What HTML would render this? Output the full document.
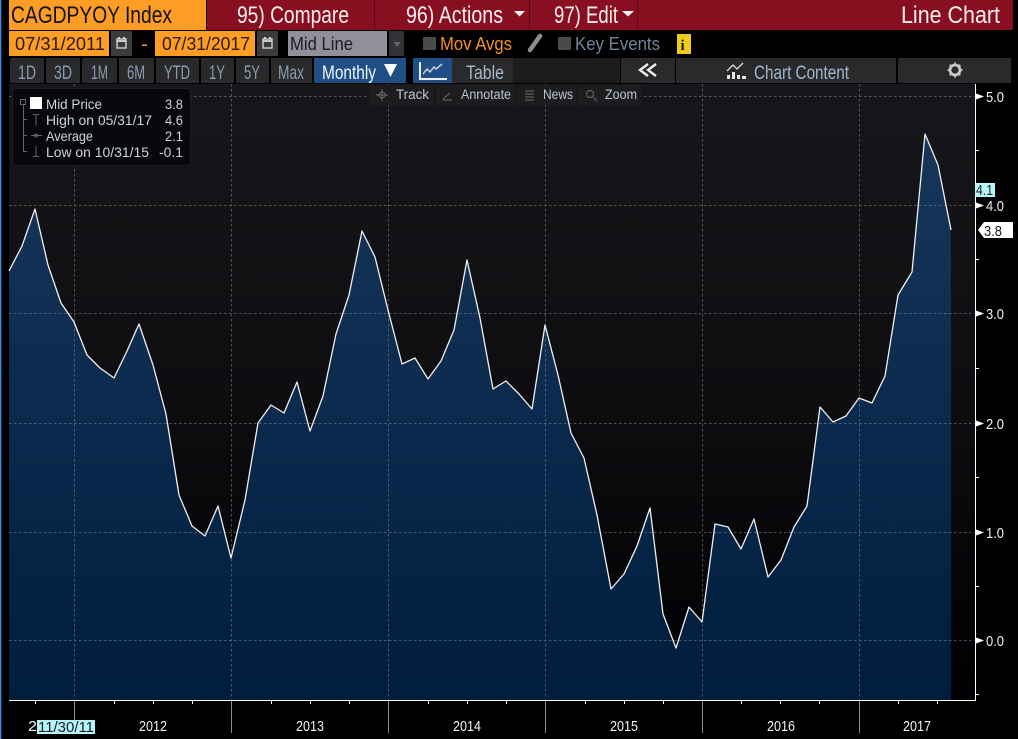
<!DOCTYPE html>
<html><head><meta charset="utf-8"><style>
html,body{margin:0;padding:0;background:#000;width:1018px;height:739px;overflow:hidden}
svg{display:block}
text{font-family:"Liberation Sans",sans-serif}
</style></head><body>
<svg width="1018" height="739" viewBox="0 0 1018 739" xmlns="http://www.w3.org/2000/svg">
<defs>
<linearGradient id="bg" x1="0" y1="84" x2="0" y2="700" gradientUnits="userSpaceOnUse"><stop offset="0" stop-color="#17171b"/><stop offset="0.5" stop-color="#0e0e11"/><stop offset="1" stop-color="#000003"/></linearGradient>
<linearGradient id="ar" x1="0" y1="134" x2="0" y2="700" gradientUnits="userSpaceOnUse"><stop offset="0" stop-color="#17365a"/><stop offset="0.4" stop-color="#0d2c50"/><stop offset="1" stop-color="#001d3d"/></linearGradient>
</defs>
<rect width="1018" height="739" fill="#000"/>
<rect x="0" y="0" width="1.3" height="739" fill="#3f8be0"/>
<!-- plot -->
<rect x="9" y="84" width="966" height="616" fill="url(#bg)"/>
<path fill="url(#ar)" d="M9,700L9,271L22,246L35,209L48,265L61,303L74,322L87,355L100,368L114,378L127,351L139,324L153,365L166,414L179,495L192,526L205,536L218,506L231,558L245,500L258,423L271,405L284,413L297,382L310,431L323,396L336,334L349,295L362,231L375,257L388,310L402,364L415,358L428,379L441,361L454,330L467,260L480,318L493,389L506,381L519,394L532,409L545,325L558,375L571,433L584,458L597,515L611,589L624,574L637,546L650,508L663,614L676,648L689,607L702,622L715,524L728,527L741,549L754,519L768,577L781,560L794,527L807,506L820,407L833,422L846,416L859,398L872,403L885,376L898,295L912,272L925,134L938,165L951,230L951,700Z"/>
<g stroke="#8a8d92" stroke-width="1" stroke-dasharray="2.500 2.500" fill="none" opacity=".55">
<path d="M9,96.500H975M9,205.500H975M9,313.500H975M9,423.500H975M9,532.500H975M9,640.500H975"/>
<path d="M74.500,84V700M231.500,84V700M388.500,84V700M545.500,84V700M702.500,84V700M859.500,84V700"/>
</g>
<path fill="none" stroke="#f0f0f0" stroke-width="1.300" stroke-linejoin="round" d="M9,271L22,246L35,209L48,265L61,303L74,322L87,355L100,368L114,378L127,351L139,324L153,365L166,414L179,495L192,526L205,536L218,506L231,558L245,500L258,423L271,405L284,413L297,382L310,431L323,396L336,334L349,295L362,231L375,257L388,310L402,364L415,358L428,379L441,361L454,330L467,260L480,318L493,389L506,381L519,394L532,409L545,325L558,375L571,433L584,458L597,515L611,589L624,574L637,546L650,508L663,614L676,648L689,607L702,622L715,524L728,527L741,549L754,519L768,577L781,560L794,527L807,506L820,407L833,422L846,416L859,398L872,403L885,376L898,295L912,272L925,134L938,165L951,230"/>
<!-- axes -->
<path stroke="#fff" stroke-width="1" fill="none" d="M975.500,84V700.500H9"/>
<path stroke="#fff" stroke-width="1" fill="none" d="M975,150.500h4M975,259.500h4M975,368.500h4M975,477.500h4M975,586.500h4M975,694.500h4"/>
<path stroke="#fff" stroke-width="1" fill="none" d="M35.500,700v4M114.500,700v4M153.500,700v4M192.500,700v4M271.500,700v4M310.500,700v4M349.500,700v4M428.500,700v4M467.500,700v4M506.500,700v4M585.500,700v4M624.500,700v4M663.500,700v4M741.500,700v4M780.500,700v4M819.500,700v4M898.500,700v4M937.500,700v4"/>
<path stroke="#8c8c8c" stroke-width="1" fill="none" d="M74.500,701V733M231.500,701V733M388.500,701V733M545.500,701V733M702.500,701V733M859.500,701V733"/>
<g fill="#fff">
<path d="M976,93.500l8,3l-8,3zM976,202.500l8,3l-8,3zM976,310.500l8,3l-8,3zM976,420.500l8,3l-8,3zM976,529.500l8,3l-8,3zM976,637.500l8,3l-8,3z"/>
</g>
<g fill="#e8f0fa" font-size="15">
<text x="986" y="102" textLength="18" lengthAdjust="spacingAndGlyphs">5.0</text>
<text x="986" y="211" textLength="18" lengthAdjust="spacingAndGlyphs">4.0</text>
<text x="986" y="319" textLength="18" lengthAdjust="spacingAndGlyphs">3.0</text>
<text x="986" y="429" textLength="18" lengthAdjust="spacingAndGlyphs">2.0</text>
<text x="986" y="538" textLength="18" lengthAdjust="spacingAndGlyphs">1.0</text>
<text x="986" y="646" textLength="18" lengthAdjust="spacingAndGlyphs">0.0</text>
</g>
<rect x="975" y="183" width="20" height="14" fill="#b4f6fb"/>
<text x="976" y="195" font-size="14.500" fill="#222" textLength="17" lengthAdjust="spacingAndGlyphs">4.1</text>
<path fill="#fff" d="M978,230l6,-8h29v16h-29z"/>
<text x="984" y="236" font-size="15" fill="#1a1a1a" textLength="18" lengthAdjust="spacingAndGlyphs">3.8</text>
<g fill="#f0f4fa" font-size="14.500">
<text x="28" y="731" textLength="9" lengthAdjust="spacingAndGlyphs">2</text>
<text x="139" y="731" textLength="28" lengthAdjust="spacingAndGlyphs">2012</text>
<text x="296" y="731" textLength="28" lengthAdjust="spacingAndGlyphs">2013</text>
<text x="453" y="731" textLength="28" lengthAdjust="spacingAndGlyphs">2014</text>
<text x="610" y="731" textLength="28" lengthAdjust="spacingAndGlyphs">2015</text>
<text x="767" y="731" textLength="28" lengthAdjust="spacingAndGlyphs">2016</text>
<text x="903" y="731" textLength="28" lengthAdjust="spacingAndGlyphs">2017</text>
</g>
<rect x="37" y="720" width="58" height="14" fill="#b4f6fb"/>
<text x="38" y="732" font-size="14.500" fill="#1a1a1a" textLength="56" lengthAdjust="spacingAndGlyphs">11/30/11</text>
<!-- header -->
<rect x="9" y="0" width="197" height="30" fill="#fd9d26"/>
<rect x="207" y="0" width="806" height="30" fill="#880f20"/>
<path stroke="#5a0a14" stroke-width="1" d="M374.500,0V30M529.500,0V30M637.500,0V30"/>
<text x="11" y="23" font-size="24" fill="#111" textLength="161" lengthAdjust="spacingAndGlyphs">CAGDPYOY Index</text>
<g fill="#fbeef0" font-size="24">
<text x="237" y="23" textLength="112" lengthAdjust="spacingAndGlyphs">95) Compare</text>
<text x="406" y="23" textLength="97" lengthAdjust="spacingAndGlyphs">96) Actions</text>
<text x="554" y="23" textLength="64" lengthAdjust="spacingAndGlyphs">97) Edit</text>
<text x="901" y="23" textLength="99" lengthAdjust="spacingAndGlyphs">Line Chart</text>
<path d="M514,11h11l-5.500,5.500zM622,11h12l-6,5.500z"/>
</g>
<!-- row 2 -->
<rect x="9" y="31" width="100" height="25" fill="#fd9d26"/>
<rect x="155" y="31" width="100" height="25" fill="#fd9d26"/>
<rect x="111" y="31" width="21" height="25" fill="#3b3b3d"/>
<rect x="257" y="31" width="21" height="25" fill="#3b3b3d"/>
<g fill="none" stroke="#dcdcdc" stroke-width="1.300">
<rect x="117" y="39" width="9" height="9"/><rect x="263" y="39" width="9" height="9"/>
<path d="M117,41h9M119,37v2M124,37v2M263,41h9M265,37v2M270,37v2" stroke-width="1.800"/>
</g>
<text x="15" y="50" font-size="18.500" fill="#2a1a05" textLength="90" lengthAdjust="spacingAndGlyphs">07/31/2011</text>
<text x="162" y="50" font-size="18.500" fill="#2a1a05" textLength="88" lengthAdjust="spacingAndGlyphs">07/31/2017</text>
<rect x="142" y="44.500" width="5" height="1.500" fill="#fd9d26"/>
<rect x="288" y="31" width="99" height="25" fill="#90909a"/>
<text x="290" y="50" font-size="18.500" fill="#1c1c22" textLength="63" lengthAdjust="spacingAndGlyphs">Mid Line</text>
<rect x="389" y="31" width="15" height="25" fill="#333335"/>
<path d="M393.500,42h7l-3.500,5z" fill="#66666a"/>
<rect x="423" y="37" width="13" height="13" fill="#4a4a4c" rx="1"/>
<text x="440" y="50" font-size="18.500" fill="#f58f1e" textLength="72" lengthAdjust="spacingAndGlyphs">Mov Avgs</text>
<path d="M530,50L540,36" fill="none" stroke="#8e8e8e" stroke-width="4.500" stroke-linecap="round"/>
<rect x="558" y="37" width="13" height="13" fill="#4a4a4c" rx="1"/>
<text x="575" y="50" font-size="18.500" fill="#708499" textLength="85" lengthAdjust="spacingAndGlyphs">Key Events</text>
<rect x="677" y="34" width="14" height="20" fill="#f0cb1e"/>
<text x="680.500" y="50" font-size="15" font-weight="bold" fill="#1a1a1a" style="font-family:'Liberation Serif',serif">i</text>
<!-- row 3 -->
<rect x="406" y="58" width="612" height="26" fill="#000"/>
<g fill="#2a2a2c">
<rect x="10" y="58" width="34" height="25"/><rect x="46" y="58" width="34" height="25"/><rect x="82" y="58" width="35" height="25"/><rect x="119" y="58" width="35" height="25"/><rect x="156" y="58" width="43" height="25"/><rect x="201" y="58" width="33" height="25"/><rect x="236" y="58" width="33" height="25"/><rect x="271" y="58" width="41" height="25"/>
<rect x="451" y="58" width="62" height="25"/>
<rect x="513" y="58" width="107" height="25" fill="#1c1c1e"/>
<rect x="621" y="58" width="54" height="25"/><rect x="676" y="58" width="220" height="25"/><rect x="898" y="58" width="113" height="25"/>
</g>
<rect x="314" y="58" width="92" height="25" fill="#1f4f85"/>
<rect x="413" y="58" width="39" height="25" fill="#1f4f85"/>
<g fill="#8a9cb0" font-size="19">
<text x="18" y="79" textLength="18" lengthAdjust="spacingAndGlyphs">1D</text>
<text x="54" y="79" textLength="18" lengthAdjust="spacingAndGlyphs">3D</text>
<text x="91" y="79" textLength="17" lengthAdjust="spacingAndGlyphs">1M</text>
<text x="127" y="79" textLength="18" lengthAdjust="spacingAndGlyphs">6M</text>
<text x="164" y="79" textLength="26" lengthAdjust="spacingAndGlyphs">YTD</text>
<text x="209" y="79" textLength="16" lengthAdjust="spacingAndGlyphs">1Y</text>
<text x="244" y="79" textLength="16" lengthAdjust="spacingAndGlyphs">5Y</text>
<text x="278" y="79" textLength="26" lengthAdjust="spacingAndGlyphs">Max</text>
<text x="466" y="79" textLength="38" lengthAdjust="spacingAndGlyphs" fill="#a8b8c8">Table</text>
<text x="754" y="79" textLength="95" lengthAdjust="spacingAndGlyphs" fill="#9fb8d0">Chart Content</text>
</g>
<text x="322" y="79" font-size="19" fill="#f2f6fb" textLength="54" lengthAdjust="spacingAndGlyphs">Monthly</text>
<path d="M384,64h13l-6.500,13z" fill="#fff"/>
<path d="M420,62V79H447" fill="none" stroke="#f0f0f0" stroke-width="2"/>
<path d="M423,74l4,-5l3,3l4,-5l2,2l6,-5" fill="none" stroke="#c8d0d8" stroke-width="1.500"/>
<path d="M648,64l-8,6l8,6M656,64l-8,6l8,6" fill="none" stroke="#ececec" stroke-width="2.400"/>
<g fill="#e6e6e6">
<rect x="727" y="75" width="3" height="4"/><rect x="732" y="72" width="3" height="7"/><rect x="737" y="75" width="3" height="4"/><rect x="742" y="76" width="4" height="3"/>
</g>
<path d="M727,71l6,-6l4,4l6,-6" fill="none" stroke="#e0e0e0" stroke-width="1.300"/>
<circle cx="955" cy="70" r="5" fill="none" stroke="#c8c8c8" stroke-width="2.800"/>
<path d="M955,62.500v3M955,74.500v3M947.500,70h3M959.500,70h3M949.700,64.700l2,2M958.300,73.300l2,2M949.700,75.300l2,-2M958.300,66.700l2,-2" stroke="#c8c8c8" stroke-width="1.800"/>
<!-- toolbar -->
<rect x="369" y="85" width="272" height="20" fill="#1d1d20"/>
<path stroke="#111" d="M434.500,85v20M516.500,85v20M577.500,85v20"/>
<g fill="#bcc6d0" font-size="13.500">
<text x="396" y="99" textLength="33" lengthAdjust="spacingAndGlyphs">Track</text>
<text x="461" y="99" textLength="50" lengthAdjust="spacingAndGlyphs">Annotate</text>
<text x="543" y="99" textLength="30" lengthAdjust="spacingAndGlyphs">News</text>
<text x="605" y="99" textLength="32" lengthAdjust="spacingAndGlyphs">Zoom</text>
</g>
<g fill="none" stroke="#6a6a6e" stroke-width="1">
<circle cx="382" cy="95" r="3"/><path d="M382,89v12M376,95h12"/>
<path d="M443,99l7,-6M443,100h9"/>
<path d="M525,91h9M525,94h9M525,97h9M525,100h9"/>
<circle cx="590" cy="94" r="3.500"/><path d="M593,97l4,4"/>
</g>
<!-- legend -->
<rect x="12.500" y="88.500" width="178" height="77" rx="3" fill="#08080c" stroke="#1e1e22"/>
<g fill="#c8d4e0" font-size="14">
<text x="46" y="109" textLength="56" lengthAdjust="spacingAndGlyphs">Mid Price</text>
<text x="46" y="125" textLength="106" lengthAdjust="spacingAndGlyphs">High on 05/31/17</text>
<text x="46" y="141" textLength="47" lengthAdjust="spacingAndGlyphs">Average</text>
<text x="46" y="157" textLength="103" lengthAdjust="spacingAndGlyphs">Low on 10/31/15</text>
<text x="165" y="109" textLength="18" lengthAdjust="spacingAndGlyphs">3.8</text>
<text x="165" y="125" textLength="18" lengthAdjust="spacingAndGlyphs">4.6</text>
<text x="165" y="141" textLength="18" lengthAdjust="spacingAndGlyphs">2.1</text>
<text x="159" y="157" textLength="24" lengthAdjust="spacingAndGlyphs">-0.1</text>
</g>
<rect x="30" y="97" width="12" height="12" fill="#fff"/>
<g fill="none" stroke="#666" stroke-width="1">
<rect x="20.500" y="99.500" width="5" height="5"/>
<path d="M23.500,105V151.500H27M23.500,119.500H27M23.500,135.500H27"/>
<path d="M33,114.500h6M36,114.500v11M31,135.500h11M33,156.500h6M36,146v10"/>
<circle cx="36" cy="135.500" r="1.500"/>
</g>
</svg>
</body></html>
